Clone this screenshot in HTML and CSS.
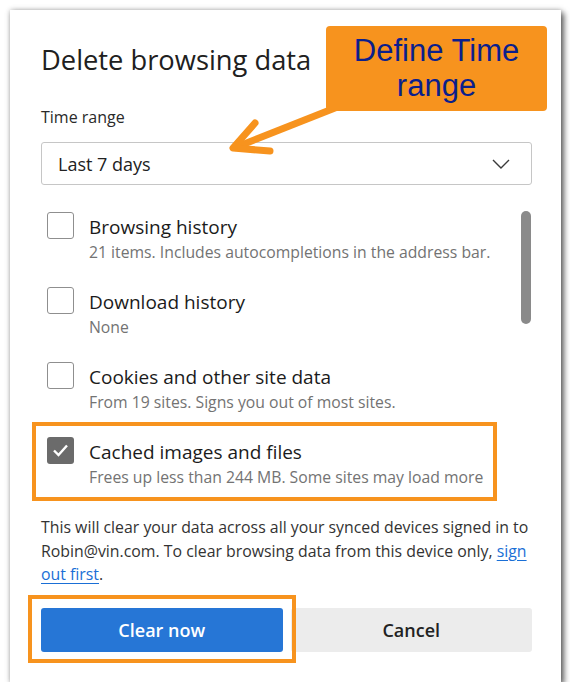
FILE: index.html
```html
<!DOCTYPE html>
<html lang="en">
<head>
<meta charset="utf-8">
<title>Delete browsing data</title>
<link rel="stylesheet" href="styles.css">
</head>
<body>
<div class="dialog">
  <h1 class="title">Delete browsing data</h1>
  <div class="label">Time range</div>
  <div class="select">
    <span class="select-value">Last 7 days</span>
    <svg class="chevron" width="18" height="10" viewBox="0 0 18 10"><polyline points="1,1 9,9 17,1" fill="none" stroke="#3a3a3a" stroke-width="1.4"/></svg>
  </div>
  <div class="list">
    <div class="items">
      <div class="item">
        <span class="box"></span>
        <div class="text"><div class="item-title">Browsing history</div><div class="item-sub">21 items. Includes autocompletions in the address bar.</div></div>
      </div>
      <div class="item">
        <span class="box"></span>
        <div class="text"><div class="item-title">Download history</div><div class="item-sub">None</div></div>
      </div>
      <div class="item">
        <span class="box"></span>
        <div class="text"><div class="item-title">Cookies and other site data</div><div class="item-sub">From 19 sites. Signs you out of most sites.</div></div>
      </div>
      <div class="item">
        <span class="box checked"><svg width="27" height="27" viewBox="0 0 27 27"><polyline points="7,13.5 11.5,18 20,8.5" fill="none" stroke="#fff" stroke-width="2.4"/></svg></span>
        <div class="text"><div class="item-title">Cached images and files</div><div class="item-sub">Frees up less than 244 MB. Some sites may load more</div></div>
      </div>
    </div>
    <div class="scrollbar"></div>
  </div>
  <p class="note">This will clear your data across all your synced devices signed in to<br>Robin@vin.com. To clear browsing data from this device only, <a href="#">sign</a><br><a href="#">out first</a>.</p>
  <div class="buttons">
    <button class="btn primary">Clear now</button>
    <button class="btn secondary">Cancel</button>
  </div>

  <div class="hl hl-item"></div>
  <div class="hl hl-btn"></div>
  <svg class="arrow" width="551" height="672" viewBox="0 0 551 672">
    <line x1="330" y1="96" x2="224" y2="138" stroke="#f7931e" stroke-width="7"/>
    <polyline points="245,113 223,138 260,141" fill="none" stroke="#f7931e" stroke-width="7" stroke-linejoin="round" stroke-linecap="round"/>
  </svg>
  <div class="callout">Define Time<br>range</div>
</div>
</body>
</html>
```
FILE: styles.css
```css
html, body {
  margin: 0;
  padding: 0;
  background: #ffffff;
}
body {
  font-family: "Open Sans", "Noto Sans", sans-serif;
  color: #1f1f1f;
}
.dialog {
  position: relative;
  margin: 10px 0 0 10px;
  width: 551px;
  height: 672px;
  box-sizing: border-box;
  padding: 33px 29px 30px 31px;
  background: #ffffff;
  box-shadow: 3px 3px 6px rgba(0, 0, 0, 0.6), 0 0 5px rgba(0, 0, 0, 0.25);
  display: flex;
  flex-direction: column;
}
.title {
  margin: 0;
  font-size: 27.3px;
  line-height: 34px;
  font-weight: 400;
  color: #202020;
}
.label {
  margin-top: 29px;
  font-size: 16px;
  line-height: 22px;
  color: #2a2a2a;
}
.select {
  margin-top: 14px;
  height: 43px;
  box-sizing: border-box;
  border: 1px solid #c6c6c6;
  border-radius: 3px;
  display: flex;
  align-items: center;
  justify-content: space-between;
  padding: 0 21px 0 16px;
}
.select-value {
  font-size: 18px;
  color: #222;
}
.chevron { display: block; }
.list {
  margin-top: 27px;
  display: flex;
  justify-content: space-between;
  align-items: flex-start;
}
.items {
  display: flex;
  flex-direction: column;
  gap: 25px;
}
.item {
  display: flex;
  align-items: flex-start;
  gap: 15px;
  height: 50px;
  padding-left: 6px;
}
.box {
  width: 27px;
  height: 27px;
  box-sizing: border-box;
  border: 1.5px solid #8f8f8f;
  border-radius: 3px;
  flex: none;
}
.box.checked {
  border: none;
  background: #6b6b6b;
}
.box svg { display: block; }
.text {
  padding-top: 2px;
}
.item-title {
  font-size: 19px;
  line-height: 26px;
  color: #1b1b1b;
}
.item-sub {
  font-size: 15.75px;
  line-height: 24px;
  color: #737373;
}
.scrollbar {
  width: 10px;
  height: 113px;
  margin-top: -1px;
  margin-right: 1px;
  border-radius: 5px;
  background: #8a8a8a;
}
.note {
  margin: 29px 0 0 0;
  font-size: 15.85px;
  line-height: 23.5px;
  color: #333333;
  white-space: nowrap;
}
.note a {
  color: #1a6fd6;
  text-decoration: underline;
  text-underline-offset: 3px;
}
.buttons {
  margin-top: 21.5px;
  display: flex;
  gap: 8px;
}
.btn {
  flex: 1;
  height: 44px;
  border: none;
  border-radius: 3px;
  font-family: "Open Sans", "Noto Sans", sans-serif;
  font-size: 18px;
  font-weight: 600;
}
.primary {
  background: #2676d6;
  color: #ffffff;
}
.secondary {
  background: #ececec;
  color: #222222;
}
.hl {
  position: absolute;
  box-sizing: border-box;
  border: 4.5px solid #f7931e;
}
.hl-item {
  left: 22px;
  top: 412px;
  width: 465px;
  height: 79px;
}
.hl-btn {
  left: 18px;
  top: 585px;
  width: 268px;
  height: 68px;
}
.arrow {
  position: absolute;
  left: 0;
  top: 0;
  pointer-events: none;
}
.callout {
  position: absolute;
  left: 316px;
  top: 16px;
  width: 221px;
  height: 85px;
  box-sizing: border-box;
  padding-top: 7px;
  background: #f7931e;
  border-radius: 4px;
  text-align: center;
  font-family: "Liberation Sans", Arial, sans-serif;
  font-size: 31px;
  line-height: 35px;
  color: #0b1f8c;
}
```
